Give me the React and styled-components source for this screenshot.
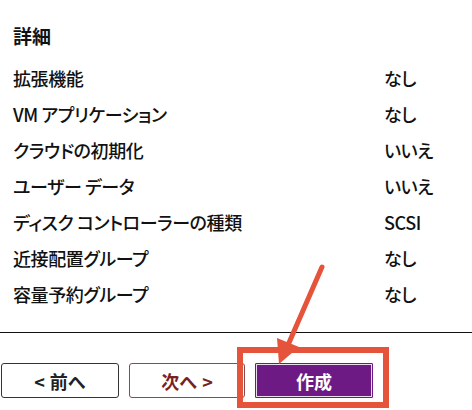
import React from "react";
import styled, { createGlobalStyle } from "styled-components";

const Global = createGlobalStyle`
  html, body { margin: 0; padding: 0; background: #fff; }
  body {
    font-family: "Noto Sans CJK JP", "Noto Sans", sans-serif;
    color: #111;
  }
  * { box-sizing: border-box; }
`;

const Page = styled.div`
  position: relative;
  width: 472px;
  height: 410px;
  overflow: hidden;
  padding-top: 24px;
`;

const Heading = styled.h2`
  margin: 0 0 12px 13px;
  font-size: 19px;
  line-height: 24px;
  font-weight: 700;
`;

const List = styled.div`
  display: flex;
  flex-direction: column;
  padding-left: 13px;
`;

const Row = styled.div`
  display: grid;
  grid-template-columns: 371px 1fr;
  height: 36px;
  align-items: center;
  font-size: 18px;
  font-weight: 500;
  font-feature-settings: "palt";
  letter-spacing: -0.4px;
`;

const Separator = styled.hr`
  margin: 20px 0 0;
  border: none;
  border-top: 1px solid #111;
`;

const Buttons = styled.div`
  display: flex;
  gap: 10px;
  padding: 30px 0 0 1px;
`;

const Button = styled.button`
  position: relative;
  width: ${(p) => p.$w}px;
  height: 35px;
  font-family: inherit;
  font-size: 18px;
  font-weight: 700;
  display: flex;
  align-items: center;
  justify-content: center;
  gap: 5px;
  padding: 0;
  background: ${(p) => (p.$primary ? "#6d1a85" : "#fff")};
  color: ${(p) => (p.$primary ? "#fff" : p.$tone)};
  border: 1px solid ${(p) => (p.$primary ? "#6d1a85" : p.$line)};
  box-shadow: ${(p) => (p.$primary ? "inset 0 0 0 1px rgba(255,255,255,0.85)" : "none")};
  border-radius: ${(p) => (p.$primary ? "1px" : "3px")};
`;

const Highlight = styled.span`
  position: absolute;
  left: -19px;
  top: -17px;
  width: 152px;
  height: 61px;
  border: 6px solid #e5533a;
  pointer-events: none;
`;

const Overlay = styled.svg`
  position: absolute;
  left: 0;
  top: 0;
  pointer-events: none;
`;

const rows = [
  ["拡張機能", "なし"],
  ["VM アプリケーション", "なし"],
  ["クラウドの初期化", "いいえ"],
  ["ユーザー データ", "いいえ"],
  ["ディスク コントローラーの種類", "SCSI"],
  ["近接配置グループ", "なし"],
  ["容量予約グループ", "なし"],
];

export default function App() {
  return (
    <>
      <Global />
      <Page>
        <Heading>詳細</Heading>
        <List>
          {rows.map(([k, v]) => (
            <Row key={k}>
              <span>{k}</span>
              <span>{v}</span>
            </Row>
          ))}
        </List>
        <Separator />
        <Buttons>
          <Button $w={118} $tone="#222" $line="#333">
            <span>&lt;</span>
            <span>前へ</span>
          </Button>
          <Button $w={116} $tone="#7a1f24" $line="#8a4a4a">
            <span>次へ</span>
            <span>&gt;</span>
          </Button>
          <Button $w={118} $primary>
            作成
            <Highlight />
          </Button>
        </Buttons>
        <Overlay width="472" height="410" viewBox="0 0 472 410">
          <line x1="322" y1="267" x2="288" y2="345" stroke="#e5533a" strokeWidth="5" strokeLinecap="round" />
          <polygon points="279,364 299,347 277,338" fill="#e5533a" />
        </Overlay>
      </Page>
    </>
  );
}
